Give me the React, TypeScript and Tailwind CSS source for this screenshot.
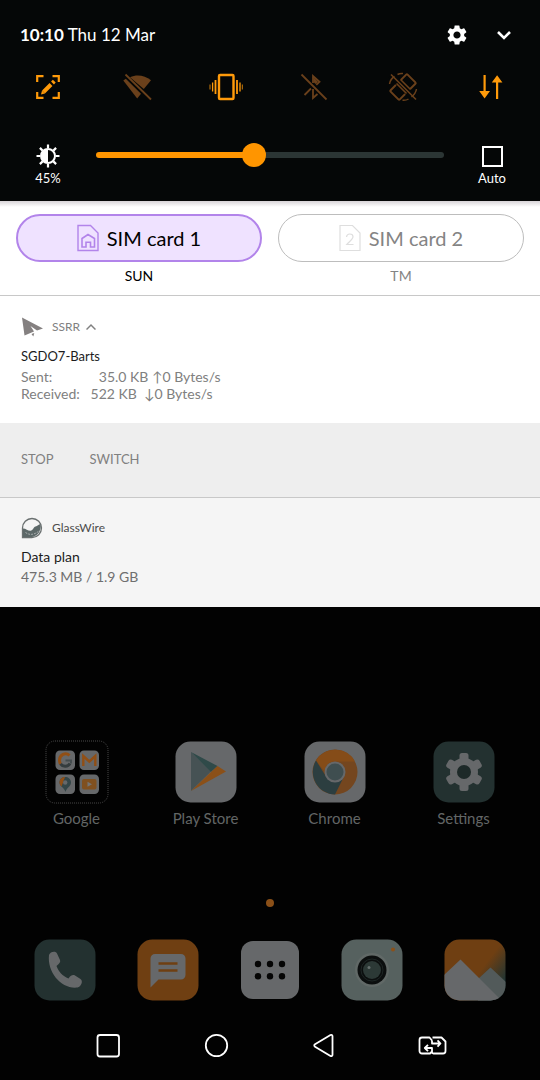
import { useState } from "react";
import type { ReactNode } from "react";
import { MdSettings } from "react-icons/md";

const EditScreenIcon = () => (
  <svg width="26" height="26" viewBox="0 0 26 26" fill="none" stroke="#ff9a0a" strokeWidth="2.2">
    <path d="M2.200 8V2.200H8.500M17.500 2.200h6.300V8M23.800 18v5.800h-6.300M8.500 23.800H2.200V18" />
    <path d="M8.500 18 16 10.500" strokeWidth="4" />
    <path d="M17.500 9l1.800-1.800" strokeWidth="4" />
    <path d="M6 20.500l1-4 3 3z" fill="#ff9a0a" stroke="none" />
  </svg>
);

const WifiOffIcon = () => (
  <svg width="30" height="28" viewBox="0 0 30 28" fill="#6a401b">
    <path d="M8 4.200C15 1.200 23 2.500 29 7.300L21.800 16z" />
    <path d="M3.800 5.800L1.300 7.600 15.200 25.500l3.800-4.700z" />
    <path d="M3.500 1.500 29 26.500" stroke="#6a401b" strokeWidth="1.8" />
  </svg>
);

const VibrateIcon = () => (
  <svg width="34" height="28" viewBox="0 0 34 28" fill="none" stroke="#ff9a0a">
    <rect x="10" y="2" width="14.500" height="24" rx="1" strokeWidth="2.400" />
    <path d="M6.500 7v14M28 7v14" strokeWidth="1.800" />
    <path d="M3.600 9.500v9M31 9.500v9" strokeWidth="1.300" />
    <path d="M1 11.500v5M33.300 11.500v5" strokeWidth=".8" />
  </svg>
);

const BluetoothOffIcon = () => (
  <svg width="28" height="28" viewBox="0 0 28 28" fill="none" stroke="#6a401b" strokeWidth="1.800">
    <path d="M1.500 1.500 26.500 26.500" />
    <path d="M13 10V3l6.500 5.700-3.200 3.100M4.500 22l6.500-6.500M13 16v9l4.500-4" />
    <path d="M13.500 4l4.500 5-2.500 2-2-2z" fill="#6a401b" stroke="none" />
  </svg>
);

const RotateOffIcon = () => (
  <svg width="30" height="30" viewBox="0 0 30 30" fill="none" stroke="#6a401b" strokeWidth="2">
    <rect x="8.500" y="3" width="13" height="24" rx="1" transform="rotate(45 15 15)" />
    <path d="M3 3 28 28" stroke="#050707" strokeWidth="7" />
    <path d="M10.500 9.500 20.500 19.500" transform="translate(2 -2)" strokeWidth="1.600" />
    <path d="M10.500 9.500 20.500 19.500" transform="translate(-2 2)" strokeWidth="1.600" />
    <path d="M3 2.500 28 27.500" strokeWidth="1.600" />
    <path d="M1.500 12C2 9 4 6 6.500 4.500M9.500 2.500c1.500-.800 4-1.200 5.500-1M28.500 17c-.500 3-2.500 6-5 8M20.500 27c-1.500 1-4 1.500-6 1.300" strokeWidth="1.500" />
  </svg>
);

const DataIcon = () => (
  <svg width="26" height="26" viewBox="0 0 26 26" fill="#ff9a0a">
    <path d="M4.500 1h2.200v16H11L5.600 24.500.2 17h4.300zM17 25V8.500h-4.200L18.100 1.200l5.300 7.300h-4.200V25z" />
  </svg>
);

const BrightnessIcon = () => (
  <svg width="24" height="24" viewBox="0 0 24 24" fill="none" stroke="#fff">
    <circle cx="12" cy="12" r="7" strokeWidth="2" />
    <path d="M12 5a7 7 0 0 0 0 14z" fill="#fff" stroke="none" />
    <path d="M12 .5V4M12 20v3.500M.5 12H4M20 12h3.500M3.900 3.900l2.700 2.700M17.400 17.400l2.700 2.700M3.900 20.100l2.700-2.700M17.400 6.600l2.700-2.700" strokeWidth="2.200" />
  </svg>
);

const SimHomeIcon = () => (
  <svg width="22" height="28" viewBox="0 0 22 28" fill="none" stroke="#b284ea" strokeWidth="1.400">
    <path d="M1 1.500h12.500L21 9v17.500H1z" />
    <path d="M5 14.500l6-4 6.500 4v8.500h-4v-4.800h-4.500v4.800H5z" strokeWidth="1.600" />
  </svg>
);

const SimTwoIcon = () => (
  <svg width="22" height="28" viewBox="0 0 22 28" fill="none" stroke="#dedede" strokeWidth="1.200">
    <path d="M1 1.500h12.500L21 9v17.500H1z" />
    <path d="M7.500 13c.2-2 1.500-3 3.300-3s3.200 1.100 3.200 2.800c0 2.500-3.500 4.600-6.200 7.700h6.700" />
  </svg>
);

const PaperPlaneIcon = () => (
  <svg width="22" height="20" viewBox="0 0 22 20" fill="#848080">
    <path d="M1 .5 22 11.500 16 13.500 9.500 9 13 14.500 3.500 18.500z" />
    <path d="M10.500 17l2.800-1-1 3.500z" />
  </svg>
);

const GlassWireIcon = () => (
  <svg width="22" height="22" viewBox="0 0 22 22" fill="none">
    <path d="M1.500 20.500V11A9.500 9.500 0 1 1 11 20.500z" stroke="#6a7070" strokeWidth="1.300" />
    <path d="M2 11.500c3 0 5 2.500 7.500 2.300S12.500 10 14.500 9.500s3-2 5-2.500c1.500 6-3 12.500-8.500 13H2z" fill="#5c6868" />
    <path d="M4.500 15.500c4 3 9 2.500 14-2" stroke="#a5aaaa" strokeWidth="1" strokeDasharray="2 1" />
  </svg>
);

const GoogleFolderIcon = () => (
  <svg width="64" height="64" viewBox="0 0 64 64">
    <rect x="1" y="1" width="62" height="62" rx="9" fill="#020202" stroke="#4a4a4a" strokeDasharray="1 1" />
    <g fill="#66686a">
      <rect x="10.500" y="10.500" width="19.500" height="19.500" rx="4.500" />
      <rect x="34.500" y="10.500" width="19.500" height="19.500" rx="4.500" />
      <rect x="10.500" y="34.500" width="19.500" height="19.500" rx="4.500" />
      <rect x="34.500" y="34.500" width="19.500" height="19.500" rx="4.500" />
    </g>
    <g fill="none" strokeWidth="3">
      <path d="M24.500 15.500c-4-4-10-.500-10 4.700 0 1.500.300 2.600 1 3.600" stroke="#914f15" />
      <path d="M15.500 23.800c2.500 3.500 7.500 3 9.500-.300" stroke="#343c3e" />
      <path d="M20.500 20.500H26v3" stroke="#454d4f" strokeWidth="2" />
      <path d="M38.300 26V16l6 5.500 6-5.500v10" stroke="#914f15" strokeWidth="2.400" />
    </g>
    <path d="M14.500 42.500c0-7.500 11.500-7.500 11.500 0 0 4-4 4.500-5.500 9.500-1.500-5-6-5.500-6-9.500z" fill="#344648" />
    <path d="M14.500 42.500c0-3.500 2.500-5.600 5.500-5.600l-3.500 9.600c-1.200-1.300-2-2.400-2-4z" fill="#914f15" />
    <circle cx="20.200" cy="42.500" r="2.200" fill="#66686a" />
    <rect x="37" y="39" width="14.500" height="10.500" rx="2" fill="#80501f" />
    <path d="M42.500 41.800l4.500 2.500-4.500 2.500z" fill="#747474" />
  </svg>
);

const PlayStoreIcon = () => (
  <svg width="62" height="62" viewBox="0 0 62 62">
    <rect x=".5" y=".5" width="61" height="61" rx="15" fill="#66686a" />
    <path d="M16 11v39l20-19.500z" fill="#465254" />
    <path d="M16 11l26.500 14-6.500 6z" fill="#2f4a49" />
    <path d="M16 50l20-19 6.500-6L51 30.500z" fill="#8b5018" />
  </svg>
);

const ChromeIcon = () => (
  <svg width="62" height="62" viewBox="0 0 62 62">
    <rect x=".5" y=".5" width="61" height="61" rx="15" fill="#66686a" />
    <circle cx="31" cy="31" r="22.500" fill="#74461f" />
    <path d="M12 19.500A22.500 22.500 0 0 1 51 20.500H31c-5 0-9.500 3-10.500 10z" fill="#854c18" />
    <path d="M12 19.500a22.500 22.500 0 0 0 19 34l8.500-17c-5 7-13 5-17.500-1z" fill="#2c3e40" />
    <circle cx="31" cy="31" r="10.500" fill="#66686a" />
    <circle cx="31" cy="31" r="8.500" fill="#3f4e50" />
  </svg>
);

const SettingsAppIcon = () => (
  <svg width="62" height="62" viewBox="0 0 62 62">
    <rect x=".5" y=".5" width="61" height="61" rx="15" fill="#233130" />
    <g fill="#66686a" transform="translate(31 31)">
      <circle r="14" />
      <rect x="-4.500" y="-19" width="9" height="38" rx="2.500" />
      <rect x="-4.500" y="-19" width="9" height="38" rx="2.500" transform="rotate(60)" />
      <rect x="-4.500" y="-19" width="9" height="38" rx="2.500" transform="rotate(120)" />
    </g>
    <circle cx="31" cy="31" r="7" fill="#1d2928" />
  </svg>
);

const PhoneIcon = () => (
  <svg width="62" height="62" viewBox="0 0 62 62">
    <rect x=".5" y=".5" width="61" height="61" rx="15" fill="#233130" />
    <path d="M15 16c1-3.500 7-4.500 8-1.500l3 6.500c.8 2-.5 3.500-3.500 6 2 5.500 6 10 12 12.500 2.500-3.500 4.500-4 6.500-3l5.500 3.500c3 2 .5 8-3 8.500C28 50.500 13 34 15 16z" fill="#66686a" />
  </svg>
);

const MessagesIcon = () => (
  <svg width="62" height="62" viewBox="0 0 62 62">
    <rect x=".5" y=".5" width="61" height="61" rx="15" fill="#6f3f12" />
    <path d="M18 15h26a4.500 4.500 0 0 1 4.500 4.500V36a4.500 4.500 0 0 1-4.500 4.500H21.500l-8 8v-29A4.500 4.500 0 0 1 18 15z" fill="#66686a" />
    <path d="M21.500 24.500h19M21.500 31.500h19" stroke="#6f3f12" strokeWidth="2.600" />
  </svg>
);

const AppDrawerIcon = () => (
  <svg width="62" height="62" viewBox="0 0 62 62" fill="#050505">
    <rect x="2" y="2" width="58" height="58" rx="12" fill="#66686a" />
    <circle cx="19" cy="25" r="3.200" />
    <circle cx="31" cy="25" r="3.200" />
    <circle cx="43" cy="25" r="3.200" />
    <circle cx="19" cy="37.300" r="3.200" />
    <circle cx="31" cy="37.300" r="3.200" />
    <circle cx="43" cy="37.300" r="3.200" />
  </svg>
);

const CameraIcon = () => (
  <svg width="62" height="62" viewBox="0 0 62 62">
    <rect x=".5" y=".5" width="61" height="61" rx="15" fill="#56615f" />
    <circle cx="31" cy="31" r="17" fill="#616967" />
    <circle cx="31" cy="31" r="14.500" fill="#0b0e0e" />
    <circle cx="31" cy="31" r="11" fill="none" stroke="#1d2524" strokeWidth="1" />
    <circle cx="31" cy="31" r="9" fill="#2c3936" />
    <circle cx="28" cy="28.500" r="1.500" fill="#66706e" />
    <circle cx="52" cy="10.500" r="2" fill="#8b5018" />
  </svg>
);

const GalleryIcon = () => (
  <svg width="62" height="62" viewBox="0 0 62 62">
    <defs>
      <clipPath id="gallery-tile">
        <rect x=".5" y=".5" width="61" height="61" rx="15" />
      </clipPath>
      <linearGradient id="gallery-sky" x1=".4" y1=".2" x2="1" y2=".65">
        <stop offset=".45" stopColor="#6f3f12" />
        <stop offset="1" stopColor="#203433" />
      </linearGradient>
    </defs>
    <g clipPath="url(#gallery-tile)">
      <rect width="62" height="62" fill="url(#gallery-sky)" />
      <path d="M34 40 46.500 28.500 62 43v19H34z" fill="#525a5a" />
      <path d="M0 36 16.500 20.500 58 62H0z" fill="#66686a" />
    </g>
  </svg>
);

const quickSettings: { label: string; icon: ReactNode }[] = [
  { label: "Capture+", icon: <EditScreenIcon /> },
  { label: "Wi-Fi", icon: <WifiOffIcon /> },
  { label: "Vibrate", icon: <VibrateIcon /> },
  { label: "Bluetooth", icon: <BluetoothOffIcon /> },
  { label: "Auto-rotate", icon: <RotateOffIcon /> },
  { label: "Mobile data", icon: <DataIcon /> },
];

const apps: { name: string; icon: ReactNode }[] = [
  { name: "Google", icon: <GoogleFolderIcon /> },
  { name: "Play Store", icon: <PlayStoreIcon /> },
  { name: "Chrome", icon: <ChromeIcon /> },
  { name: "Settings", icon: <SettingsAppIcon /> },
];

const dock: { name: string; icon: ReactNode }[] = [
  { name: "Phone", icon: <PhoneIcon /> },
  { name: "Messages", icon: <MessagesIcon /> },
  { name: "Apps", icon: <AppDrawerIcon /> },
  { name: "Camera", icon: <CameraIcon /> },
  { name: "Gallery", icon: <GalleryIcon /> },
];

const navButtons: { name: string; shape: ReactNode }[] = [
  { name: "Recent apps", shape: <rect x="3.500" y="4" width="21.500" height="21.500" rx="2.500" /> },
  { name: "Home", shape: <circle cx="14.500" cy="14.500" r="10.700" /> },
  {
    name: "Back",
    shape: <path d="M22.500 5.200v18.600c0 1.200-1 1.700-2 1.100L5 15.700c-1-.6-1-1.800 0-2.400L20.500 4.100c1-.6 2-.1 2 1.100z" />,
  },
  {
    name: "Switch SIM",
    shape: (
      <path d="M8.500 22.500H4a2.500 2.500 0 0 1-2.500-2.500V9A2.500 2.500 0 0 1 4 6.500h7.500L14 9.500M14.500 6.500h9l4 4V20a2.500 2.500 0 0 1-2.500 2.500h-9.500a1.500 1.500 0 0 1-1.500-1.500v-4H7M8.500 22.500H12l2-2M10 13.800 6.800 17l3.200 3.200M14 9.500v3h8M19.500 9.300l3 3.200-3 3.200" />
    ),
  },
];

const QuickPanel = () => {
  const [brightness, setBrightness] = useState(45);

  return (
    <section className="bg-[#050707] pt-[17px] pb-[13px] text-white">
      <div className="flex h-9 items-center pr-6 pl-5">
        <p className="flex-1 text-[17px]">
          <span className="font-bold">10:10</span>{" "}
          Thu 12 Mar
        </p>
        <button aria-label="Settings" className="mr-[23px]">
          <MdSettings size={24} />
        </button>
        <button aria-label="Expand">
          <svg width="24" height="24" viewBox="0 0 24 24" fill="none" stroke="currentColor" strokeWidth="2.600">
            <path d="M6 9l6 6 6-6" />
          </svg>
        </button>
      </div>

      <div className="mt-[14px] grid h-10 grid-cols-6 px-1">
        {quickSettings.map((item) => (
          <button key={item.label} aria-label={item.label} className="flex items-center justify-center">
            {item.icon}
          </button>
        ))}
      </div>

      <div className="mt-[37px] grid grid-cols-[88px_1fr_88px] px-1">
        <label htmlFor="brightness" className="flex flex-col items-center text-[13px] leading-5">
          <BrightnessIcon />
          {brightness}%
        </label>
        <input
          id="brightness"
          type="range"
          min={0}
          max={100}
          value={brightness}
          onChange={(e) => setBrightness(Number(e.target.value))}
          style={{
            backgroundImage: `linear-gradient(to right, #ff9500 ${brightness}%, #2b3534 ${brightness}%)`,
          }}
          className="mx-1 mt-2 h-[6px] appearance-none rounded-full [&::-webkit-slider-thumb]:h-6 [&::-webkit-slider-thumb]:w-6 [&::-webkit-slider-thumb]:appearance-none [&::-webkit-slider-thumb]:rounded-full [&::-webkit-slider-thumb]:bg-[#ff9500]"
        />
        <label className="flex flex-col items-center text-[13px] leading-5">
          <span className="flex h-6 items-center">
            <input type="checkbox" className="size-[21px] appearance-none border-2 border-white checked:bg-[#ff9500]" />
          </span>
          Auto
        </label>
      </div>
    </section>
  );
};

const SimPanel = () => (
  <section className="grid grid-cols-2 gap-4 border-b border-[#c8c8c8] bg-white bg-[linear-gradient(#d8d4d8,#ffffff_6px)] px-4 pt-[13px] pb-[9px] text-center text-sm leading-5">
    <div>
      <button className="flex h-12 w-full items-center justify-center gap-2 rounded-full border-2 border-[#b284ea] bg-[#efe2ff] text-xl text-black">
        <SimHomeIcon />
        SIM card 1
      </button>
      <p className="mt-1 text-black">SUN</p>
    </div>
    <div>
      <button className="flex h-12 w-full items-center justify-center gap-2 rounded-full border border-[#bdbdbd] bg-white text-xl text-[#848484]">
        <SimTwoIcon />
        SIM card 2
      </button>
      <p className="mt-1 text-[#848484]">TM</p>
    </div>
  </section>
);

const Notifications = () => (
  <section>
    <article className="bg-white px-[21px] pt-[19px] pb-[21px] text-sm text-[#808080]">
      <div className="flex h-6 items-center gap-[9px] text-xs">
        <PaperPlaneIcon />
        <button className="flex items-center gap-[6px]">
          SSRR
          <svg width="10" height="8" viewBox="0 0 10 8" fill="none" stroke="currentColor" strokeWidth="1.500">
            <path d="M.5 6.500 5 2l4.500 4.500" />
          </svg>
        </button>
      </div>
      <h2 className="mt-[7px] text-[13px] leading-5 text-[#1c1c1c]">SGDO7-Barts</h2>
      <p className="mt-[2px] leading-[17px] whitespace-pre">{"Sent:             35.0 KB ↑0 Bytes/s"}</p>
      <p className="leading-[17px] whitespace-pre">{"Received:   522 KB  ↓0 Bytes/s"}</p>
    </article>

    <div className="flex h-[75px] items-center gap-9 border-b border-[#c8c8c8] bg-[#eeeeee] px-[21px] text-[13px] text-[#808080]">
      <button>STOP</button>
      <button>SWITCH</button>
    </div>

    <article className="bg-[#f5f5f5] px-[21px] pt-[18px] pb-5 text-sm leading-5 text-[#6f6f6f]">
      <div className="flex h-6 items-center gap-[9px] text-xs text-[#4c4c4c]">
        <GlassWireIcon />
        GlassWire
      </div>
      <h2 className="mt-[7px] text-[#1c1c1c]">Data plan</h2>
      <p>475.3 MB / 1.9 GB</p>
    </article>
  </section>
);

const HomeScreen = () => (
  <main className="flex-1 pt-[133px]">
    <div className="grid grid-cols-4 px-3">
      {apps.map((app) => (
        <a key={app.name} href="#" className="flex flex-col items-center gap-1 text-[15px] leading-5 text-[#626666]">
          <span className="flex h-16 items-center">{app.icon}</span>
          {app.name}
        </a>
      ))}
    </div>

    <div className="mx-auto mt-[71px] size-2 rounded-full bg-[#8b5018]" />

    <div className="mt-8 grid grid-cols-5 px-[14px]">
      {dock.map((app) => (
        <a key={app.name} href="#" aria-label={app.name} className="flex justify-center">
          {app.icon}
        </a>
      ))}
    </div>
  </main>
);

const NavBar = () => (
  <nav className="grid h-[70px] grid-cols-4 px-[54px]">
    {navButtons.map((item) => (
      <button key={item.name} aria-label={item.name} className="flex items-center justify-center">
        <svg width="29" height="29" viewBox="0 0 29 29" fill="none" stroke="#fff" strokeWidth="1.800" strokeLinejoin="round">
          {item.shape}
        </svg>
      </button>
    ))}
  </nav>
);

const App = () => {
  return (
    <div className="flex min-h-screen flex-col bg-[#020202] font-['Lato',sans-serif]">
      <QuickPanel />
      <SimPanel />
      <Notifications />
      <HomeScreen />
      <NavBar />
    </div>
  );
};

export default App;
